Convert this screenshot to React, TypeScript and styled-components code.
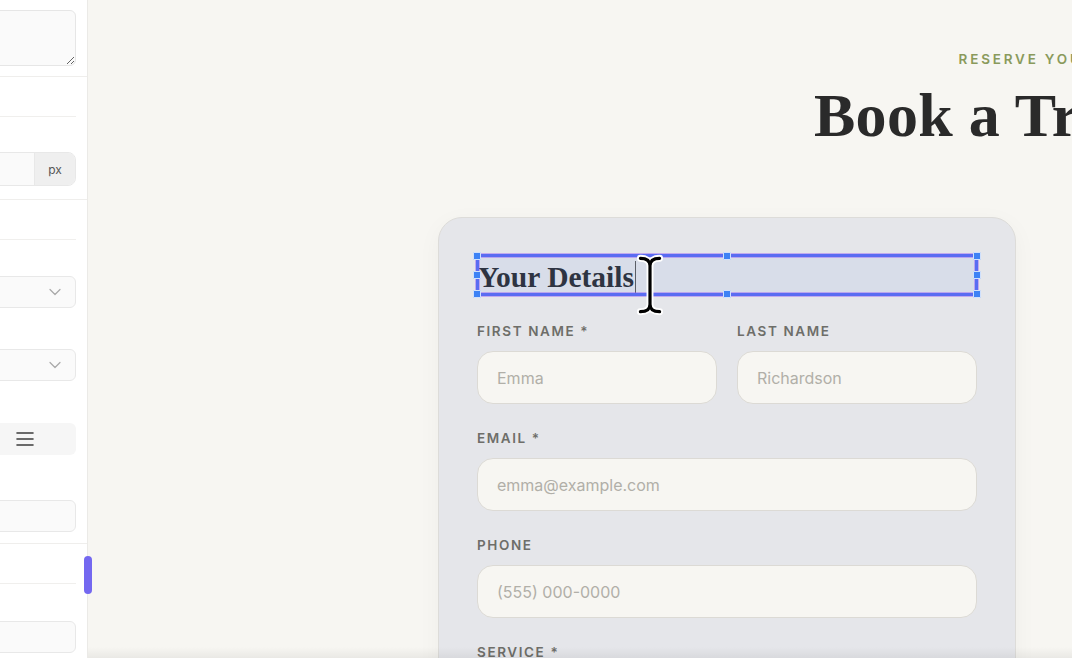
import React from "react";
import styled, { createGlobalStyle } from "styled-components";

const Global = createGlobalStyle`
  * { box-sizing: border-box; }
  html, body { margin: 0; padding: 0; overflow: hidden; }
  body { font-family: Inter, "Noto Sans", sans-serif; background: #f7f6f2; }
`;

const Root = styled.div`
  display: flex;
  width: 100vw;
  height: 658px;
  position: relative;
  overflow: hidden;
`;

/* ---------- Left inspector panel ---------- */
const Panel = styled.aside`
  width: 88px;
  flex-shrink: 0;
  height: 100%;
  background: #ffffff;
  border-right: 1px solid #ebeae7;
  overflow: hidden;
  display: flex;
  justify-content: flex-end;
`;

const PanelInner = styled.div`
  width: 300px;
  flex-shrink: 0;
  display: flex;
  flex-direction: column;
`;

const Section = styled.section<{ $pad?: string }>`
  border-bottom: 1px solid #efeeec;
  padding: ${(p) => p.$pad ?? "0 11px 12px 16px"};
  display: flex;
  flex-direction: column;
`;

const SectionHeader = styled.div`
  height: 40px;
  border-bottom: 1px solid #f0efed;
  flex-shrink: 0;
`;

const PanelFields = styled.div`
  display: flex;
  flex-direction: column;
  gap: 16px;
  padding-top: 12px;
`;

const PanelField = styled.div<{ $labelGap?: number }>`
  display: flex;
  flex-direction: column;
  gap: ${(p) => p.$labelGap ?? 6}px;
`;

const PanelLabel = styled.div`
  height: 18px;
  font-size: 12px;
  color: #666;
`;

const TextArea = styled.textarea`
  display: block;
  width: 100%;
  height: 56px;
  background: #fafafa;
  border: 1px solid #e6e6e6;
  border-radius: 6px;
  resize: vertical;
  font-family: Inter, sans-serif;
  outline: none;
`;

const UnitInput = styled.div`
  display: flex;
  height: 34px;
  border: 1px solid #e8e8e8;
  border-radius: 8px;
  background: #fafafa;
  overflow: hidden;
`;

const UnitField = styled.div`
  flex: 1;
`;

const UnitSuffix = styled.div`
  width: 41px;
  background: #efefef;
  border-left: 1px solid #e8e8e8;
  display: flex;
  align-items: center;
  justify-content: center;
  font-size: 12px;
  color: #555;
`;

const SelectBox = styled.div`
  height: 32px;
  border: 1px solid #e8e8e8;
  border-radius: 6px;
  background: #fafafa;
  display: flex;
  align-items: center;
  justify-content: flex-end;
  padding-right: 13px;
`;

const Segmented = styled.div`
  height: 32px;
  border-radius: 6px;
  background: #f6f6f6;
  display: flex;
  align-items: center;
  justify-content: flex-end;
  padding-right: 41px;
`;

const PlainInput = styled.div`
  height: 32px;
  border: 1px solid #e8e8e8;
  border-radius: 6px;
  background: #fafafa;
`;

const ScrollThumb = styled.div`
  position: absolute;
  z-index: 5;
  left: 84px;
  top: 556px;
  width: 8px;
  height: 38px;
  border-radius: 4px;
  background: #7468f0;
`;

/* ---------- Canvas ---------- */
const Canvas = styled.main`
  flex: 1;
  position: relative;
  overflow: hidden;
  background: #f7f6f2;
`;

const Page = styled.div`
  width: 1932px;
  padding-top: 51px;
`;

const Header = styled.header`
  text-align: center;
`;

const Eyebrow = styled.div`
  font-family: Inter, sans-serif;
  font-size: 13.5px;
  line-height: 16px;
  font-weight: 600;
  letter-spacing: 2.8px;
  color: #8a9a5c;
  text-transform: uppercase;
`;

const Title = styled.h1`
  margin: 15px 0 0;
  font-family: "Liberation Serif", "DejaVu Serif", serif;
  font-weight: 700;
  font-size: 62px;
  line-height: 67px;
  color: #2a2a2a;
  letter-spacing: 0.3px;
`;

const Layout = styled.div`
  margin-top: 68px;
  padding-left: 350px;
  display: grid;
  grid-template-columns: 578px 1fr;
`;

const Card = styled.div`
  background: #e5e6ea;
  border: 1px solid #dddcd9;
  border-radius: 24px;
  padding: 37px 38px 60px;
  box-shadow: 0 6px 24px rgba(0, 0, 0, 0.04);
`;

const CardHeading = styled.h2`
  position: relative;
  margin: 0 0 28px;
  height: 40px;
  padding-left: 1px;
  background: #d8dde9;
  font-family: "Liberation Serif", "DejaVu Serif", serif;
  font-weight: 700;
  font-size: 29.5px;
  line-height: 44px;
  color: #2e3442;
  white-space: nowrap;
`;

const Caret = styled.span`
  display: inline-block;
  width: 1.5px;
  height: 34px;
  margin-left: 1px;
  background: #5a5e66;
  vertical-align: -8px;
`;

const SelectionFrame = styled.div`
  position: absolute;
  inset: -1px;
  border: 3px solid #5a6cf2;
  box-shadow: 0 0 0 1px rgba(150, 100, 245, 0.45),
    inset 0 0 0 1px rgba(150, 100, 245, 0.45);
  pointer-events: none;
`;

const Handle = styled.span`
  position: absolute;
  width: 8px;
  height: 8px;
  background: #3d82f5;
  border: 1px solid #cfe0fd;
  border-radius: 1px;
`;

const PointerIcon = styled.svg`
  position: absolute;
  left: 158px;
  top: -2px;
  overflow: visible;
`;

const FormGrid = styled.div`
  display: grid;
  grid-template-columns: 1fr 1fr;
  column-gap: 20px;
  row-gap: 26px;
`;

const Field = styled.div<{ $span?: boolean }>`
  display: flex;
  flex-direction: column;
  gap: 12px;
  grid-column: ${(p) => (p.$span ? "1 / -1" : "auto")};
`;

const Label = styled.label`
  font-family: Inter, sans-serif;
  font-size: 13.5px;
  line-height: 16px;
  font-weight: 600;
  letter-spacing: 1.6px;
  color: #6e6e69;
  text-transform: uppercase;
`;

const TextInput = styled.input`
  height: 53px;
  width: 100%;
  padding: 0 19px;
  border: 1px solid #dcdad5;
  border-radius: 16px;
  background: #f7f6f2;
  font-family: Inter, sans-serif;
  font-size: 16px;
  color: #333;
  outline: none;
  &::placeholder {
    color: #b1afa8;
  }
`;

const BottomShade = styled.div`
  position: absolute;
  left: 0;
  right: 0;
  bottom: 0;
  height: 11px;
  background: linear-gradient(to bottom, rgba(0, 0, 0, 0), rgba(0, 0, 0, 0.055));
  pointer-events: none;
`;

const Chevron = () => (
  <svg width="14" height="14" viewBox="0 0 14 14" fill="none">
    <path d="M2 4.5 L7 9.5 L12 4.5" stroke="#a8a8a8" strokeWidth="1.2" strokeLinecap="round" strokeLinejoin="round" />
  </svg>
);

const JustifyIcon = () => (
  <svg width="20" height="20" viewBox="0 0 20 20" fill="none">
    <path d="M2 4h16M2 10h16M2 16h16" stroke="#3c3c3c" strokeWidth="1.6" strokeLinecap="round" />
  </svg>
);

const handles: Array<[string, string]> = [
  ["-4px", "-3px"],
  ["calc(50% - 4px)", "-3px"],
  ["calc(100% - 4px)", "-3px"],
  ["-4px", "calc(50% - 4px)"],
  ["calc(100% - 4px)", "calc(50% - 4px)"],
  ["-4px", "calc(100% - 5px)"],
  ["calc(50% - 4px)", "calc(100% - 5px)"],
  ["calc(100% - 4px)", "calc(100% - 5px)"],
];

const beam =
  "M5 5 C10 5 14 7 14 12 C14 7 18 5 23 5 M14 12 V48 M5 55 C10 55 14 53 14 48 C14 53 18 55 23 55";

export default function App() {
  return (
    <>
      <Global />
      <Root>
        <Panel>
          <PanelInner>
            <Section $pad="10px 11px 10px 16px">
              <TextArea readOnly />
            </Section>
            <Section $pad="0 11px 13px 16px">
              <SectionHeader />
              <PanelFields>
                <PanelField $labelGap={5}>
                  <PanelLabel />
                  <UnitInput>
                    <UnitField />
                    <UnitSuffix>px</UnitSuffix>
                  </UnitInput>
                </PanelField>
              </PanelFields>
            </Section>
            <Section $pad="0 11px 11px 16px">
              <SectionHeader />
              <PanelFields>
                <PanelField>
                  <PanelLabel />
                  <SelectBox>
                    <Chevron />
                  </SelectBox>
                </PanelField>
                <PanelField $labelGap={7}>
                  <PanelLabel />
                  <SelectBox>
                    <Chevron />
                  </SelectBox>
                </PanelField>
                <PanelField $labelGap={8}>
                  <PanelLabel />
                  <Segmented>
                    <JustifyIcon />
                  </Segmented>
                </PanelField>
                <PanelField $labelGap={11}>
                  <PanelLabel />
                  <PlainInput />
                </PanelField>
              </PanelFields>
            </Section>
            <Section>
              <SectionHeader />
              <PanelFields>
                <PanelField $labelGap={7}>
                  <PanelLabel />
                  <PlainInput />
                </PanelField>
              </PanelFields>
            </Section>
          </PanelInner>
        </Panel>
        <ScrollThumb />

        <Canvas>
          <Page>
            <Header>
              <Eyebrow>Reserve Your Visit</Eyebrow>
              <Title>Book a Treatment</Title>
            </Header>
            <Layout>
              <Card>
                <CardHeading>
                  Your Details
                  <Caret />
                  <SelectionFrame />
                  {handles.map(([l, t], i) => (
                    <Handle key={i} style={{ left: l, top: t }} />
                  ))}
                  <PointerIcon width="30" height="64" viewBox="0 0 28 60">
                    <g fill="none" strokeLinecap="round" strokeLinejoin="round">
                      <path d={beam} stroke="#ffffff" strokeWidth="6.5" />
                      <path d={beam} stroke="#000000" strokeWidth="3" />
                    </g>
                  </PointerIcon>
                </CardHeading>
                <FormGrid>
                  <Field>
                    <Label>First Name *</Label>
                    <TextInput placeholder="Emma" readOnly />
                  </Field>
                  <Field>
                    <Label>Last Name</Label>
                    <TextInput placeholder="Richardson" readOnly />
                  </Field>
                  <Field $span>
                    <Label>Email *</Label>
                    <TextInput placeholder="emma@example.com" readOnly />
                  </Field>
                  <Field $span>
                    <Label>Phone</Label>
                    <TextInput placeholder="(555) 000-0000" readOnly />
                  </Field>
                  <Field $span>
                    <Label>Service *</Label>
                    <TextInput placeholder="Select a service" readOnly />
                  </Field>
                </FormGrid>
              </Card>
            </Layout>
          </Page>
          <BottomShade />
        </Canvas>
      </Root>
    </>
  );
}
